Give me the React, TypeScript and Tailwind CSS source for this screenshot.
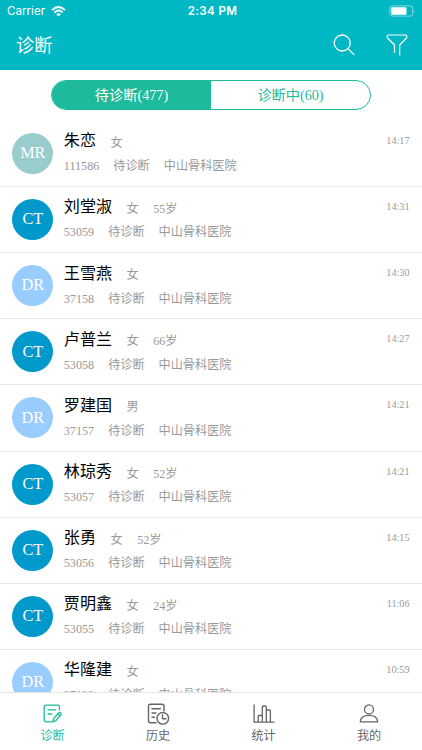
import React from 'react';

type Modality = 'MR' | 'CT' | 'DR';

interface Patient {
  name: string;
  sex: string;
  age?: string;
  id: string;
  time: string;
  type: Modality;
}

const patients: Patient[] = [
  { name: '朱恋', sex: '女', id: '111586', time: '14:17', type: 'MR' },
  { name: '刘堂淑', sex: '女', age: '55岁', id: '53059', time: '14:31', type: 'CT' },
  { name: '王雪燕', sex: '女', id: '37158', time: '14:30', type: 'DR' },
  { name: '卢普兰', sex: '女', age: '66岁', id: '53058', time: '14:27', type: 'CT' },
  { name: '罗建国', sex: '男', id: '37157', time: '14:21', type: 'DR' },
  { name: '林琼秀', sex: '女', age: '52岁', id: '53057', time: '14:21', type: 'CT' },
  { name: '张勇', sex: '女', age: '52岁', id: '53056', time: '14:15', type: 'CT' },
  { name: '贾明鑫', sex: '女', age: '24岁', id: '53055', time: '11:06', type: 'CT' },
  { name: '华隆建', sex: '女', id: '37133', time: '10:59', type: 'DR' },
];

const avatarColor: Record<Modality, string> = {
  MR: 'bg-[#99cccc]',
  CT: 'bg-[#0099cc]',
  DR: 'bg-[#99ccff]',
};

function StatusBar() {
  return (
    <div className="grid h-[22px] grid-cols-3 items-center pl-[7px] pr-[6px] pt-px font-['Inter'] text-[11.6px] leading-none">
      <div className="flex items-center gap-[6px]">
        <span className="text-[11.6px]">Carrier</span>
        <svg width="15" height="11" viewBox="0 0 15 11" fill="none" stroke="white" strokeWidth="1.9">
          <path d="M1 4.1Q7.5-1.9 14 4.1" />
          <path d="M3.4 6.5Q7.5 2.7 11.6 6.5" />
          <path d="M5.2 8.2Q7.5 6.2 9.8 8.2L7.5 10.6Z" fill="white" stroke="none" />
        </svg>
      </div>
      <span className="pl-[2px] text-center font-semibold tracking-[0.35px]">2:34 PM</span>
      <svg className="-mt-px justify-self-end" width="27" height="12" viewBox="0 0 27 12" fill="none">
        <rect x=".9" y=".9" width="22.8" height="10.2" rx="2.5" stroke="white" strokeOpacity=".5" />
        <rect x="2.3" y="2.3" width="15.2" height="7.4" rx="1" fill="white" />
        <path d="M25 4.3Q26.2 6 25 7.7Z" fill="white" fillOpacity=".6" />
      </svg>
    </div>
  );
}

function Row({ p }: { p: Patient }) {
  return (
    <li className="flex h-[66.15px] shrink-0 border-b border-[#e9e9e9] pl-[12.3px] pr-[12.5px]">
      <div className={`mt-[12px] flex size-[41px] shrink-0 items-center justify-center rounded-full text-[16.3px] leading-none text-white ${avatarColor[p.type]}`}>
        {p.type}
      </div>
      <div className="ml-[10.5px] flex flex-1 flex-col pt-[8.5px] text-[12.15px] text-[#999]">
        <div className="flex h-6 items-center gap-[14.5px]">
          <span className="text-[16.1px] leading-6 text-black">{p.name}</span>
          <span className="pt-[3px] leading-[22px]">{p.sex}</span>
          {p.age && <span className="pt-[3px] leading-[22px]">{p.age}</span>}
        </div>
        <div className="flex h-[26.5px] items-center gap-[14px] leading-[26.5px]">
          <span>{p.id}</span>
          <span>待诊断</span>
          <span>中山骨科医院</span>
        </div>
      </div>
      <time className="pt-[11px] text-[10.2px] leading-[18px] text-[#999]">{p.time}</time>
    </li>
  );
}

function DiagnoseIcon() {
  return (
    <svg width="22" height="22" viewBox="0 0 22 22" fill="none" stroke="currentColor" strokeWidth="1.3" strokeLinecap="round" strokeLinejoin="round">
      <path d="M17.5 7V4Q17.5 2.2 15.7 2.2H4Q2.2 2.2 2.2 4V17Q2.2 18.8 4 18.8H10.5" />
      <path d="M6 6.8H13.7M6 11H9.8" />
      <path d="M11.6 15.5L16.8 9.9Q17.9 9.1 18.9 10.1Q19.7 11.1 18.8 12.1L13.7 17.8L11 18.5Z" />
      <path d="M15.8 11L17.8 13.1" />
    </svg>
  );
}

function HistoryIcon() {
  return (
    <svg width="24" height="24" viewBox="0 0 24 24" fill="none" stroke="currentColor" strokeWidth="1.4" strokeLinecap="round" strokeLinejoin="round">
      <path d="M18 9V4.2Q18 2.2 16 2.2H4.5Q2.5 2.2 2.5 4.2V18.8Q2.5 20.8 4.5 20.8H10" />
      <path d="M6 6.8H14.3M6 11H10M6 15.2H8.5" />
      <circle cx="16.8" cy="16.3" r="5.8" />
      <path d="M16.5 12.7V16.7H20" />
    </svg>
  );
}

function StatsIcon() {
  return (
    <svg width="22" height="22" viewBox="0 0 22 22" fill="none" stroke="currentColor" strokeWidth="1.3" strokeLinejoin="round">
      <path d="M1.1 1.4V19.2H21.4" />
      <path d="M5.2 19V13.3Q5.2 12.5 6 12.5H8.5Q9.3 12.5 9.3 13.3M9.3 19V4Q9.3 3 10.3 3H12.2Q13.3 3 13.3 4V19M13.3 7H16.3Q17.4 7 17.4 8V19" />
    </svg>
  );
}

function UserIcon() {
  return (
    <svg width="22" height="22" viewBox="0 0 22 22" fill="none" stroke="currentColor" strokeWidth="1.3" strokeLinejoin="round">
      <circle cx="11" cy="6.4" r="4.5" />
      <path d="M2.3 18.8Q2.7 12.3 11 12.3Q19.3 12.3 19.7 18.8Z" />
    </svg>
  );
}

const tabs = [
  { label: '诊断', icon: <DiagnoseIcon />, active: true },
  { label: '历史', icon: <HistoryIcon />, active: false },
  { label: '统计', icon: <StatsIcon />, active: false },
  { label: '我的', icon: <UserIcon />, active: false },
];

export default function App() {
  return (
    <div className="flex h-[750px] w-[422px] flex-col overflow-hidden bg-white font-['Liberation_Serif','Noto_Sans_CJK_SC',serif]">
      <header className="h-[69.5px] shrink-0 bg-[#00b8c4] text-white">
        <StatusBar />
        <div className="flex h-[46px] items-center pl-4 pr-[14px]">
          <h1 className="flex-1 pt-[2px] text-[18.2px] leading-none">诊断</h1>
          <svg className="mr-[31px]" width="22" height="22" viewBox="0 0 22 22" fill="none" stroke="white" strokeWidth="1.3" strokeLinecap="round">
            <circle cx="9.2" cy="9" r="8" />
            <path d="M14.8 14.6L21 20.6" />
          </svg>
          <svg width="22" height="22" viewBox="0 0 22 22" fill="none" stroke="white" strokeWidth="1.2" strokeLinecap="round" strokeLinejoin="round">
            <path d="M8.5 18.5V11L1.5 4Q.3 1 3 1H19Q21.7 1 20.5 4L13.7 11V21" />
          </svg>
        </div>
      </header>

      <div className="flex h-[51.3px] shrink-0 items-start justify-center pt-[10px]">
        <div className="flex h-[30.5px] w-[320px] overflow-hidden rounded-full border border-[#1dbb9b] text-[14.2px] leading-[28px]">
          <button className="flex-1 bg-[#1dbb9b] text-white">待诊断(477)</button>
          <button className="flex-1 text-[#1dbb9b]">诊断中(60)</button>
        </div>
      </div>

      <ul className="flex min-h-0 flex-1 flex-col overflow-hidden">
        {patients.map((p) => <Row key={p.time + p.id} p={p} />)}
      </ul>

      <nav className="grid h-[58.5px] shrink-0 grid-cols-4 border-t border-[#e5e5e5] bg-white">
        {tabs.map((t) => (
          <div key={t.label} className={`flex flex-col items-center pr-[0.5px] pt-[9px] text-[12.1px] leading-[20px] ${t.active ? 'text-[#1dbb9b]' : 'text-[#666]'}`}>
            <div className="flex h-6 items-center">{t.icon}</div>
            <span>{t.label}</span>
          </div>
        ))}
      </nav>
    </div>
  );
}
